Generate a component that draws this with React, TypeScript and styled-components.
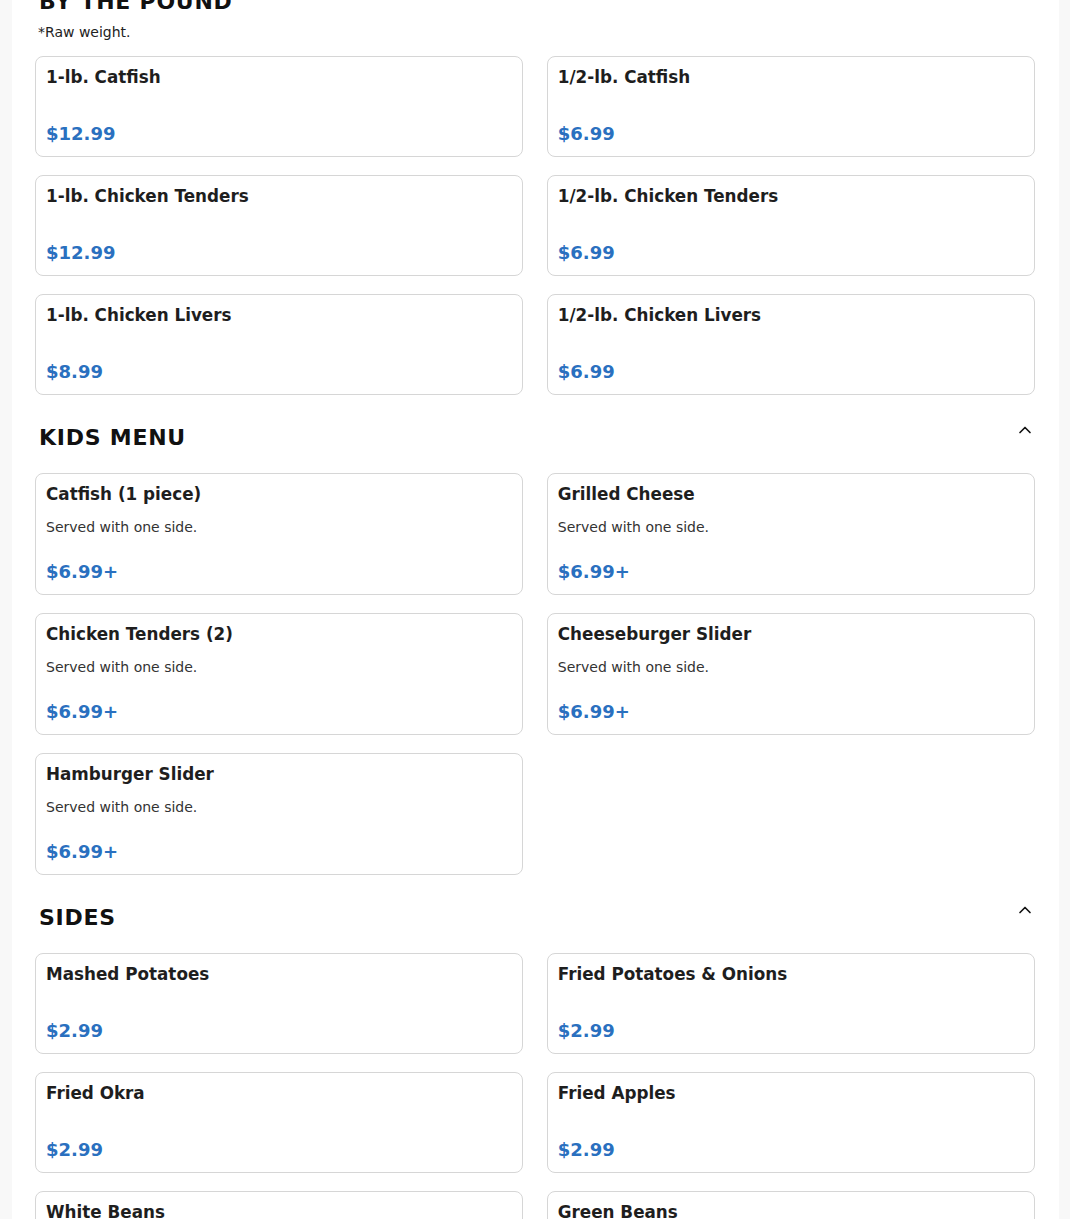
import React from 'react'
import styled, { createGlobalStyle } from 'styled-components'
import { ChevronUp } from 'lucide-react'

const GlobalStyle = createGlobalStyle`
	body {
		margin: 0;
		background: #f8f8f8;
		font-family: "DejaVu Sans", "Liberation Sans", sans-serif;
	}
`

type Item = {
	name: string
	price: string
	desc?: string
}

type Section = {
	title: string
	note?: string
	items: Item[]
}

const sections: Section[] = [
	{
		title: 'BY THE POUND',
		note: '*Raw weight.',
		items: [
			{ name: '1-lb. Catfish', price: '$12.99' },
			{ name: '1/2-lb. Catfish', price: '$6.99' },
			{ name: '1-lb. Chicken Tenders', price: '$12.99' },
			{ name: '1/2-lb. Chicken Tenders', price: '$6.99' },
			{ name: '1-lb. Chicken Livers', price: '$8.99' },
			{ name: '1/2-lb. Chicken Livers', price: '$6.99' },
		],
	},
	{
		title: 'KIDS MENU',
		items: [
			{ name: 'Catfish (1 piece)', desc: 'Served with one side.', price: '$6.99+' },
			{ name: 'Grilled Cheese', desc: 'Served with one side.', price: '$6.99+' },
			{ name: 'Chicken Tenders (2)', desc: 'Served with one side.', price: '$6.99+' },
			{ name: 'Cheeseburger Slider', desc: 'Served with one side.', price: '$6.99+' },
			{ name: 'Hamburger Slider', desc: 'Served with one side.', price: '$6.99+' },
		],
	},
	{
		title: 'SIDES',
		items: [
			{ name: 'Mashed Potatoes', price: '$2.99' },
			{ name: 'Fried Potatoes & Onions', price: '$2.99' },
			{ name: 'Fried Okra', price: '$2.99' },
			{ name: 'Fried Apples', price: '$2.99' },
			{ name: 'White Beans', price: '$2.99' },
			{ name: 'Green Beans', price: '$2.99' },
		],
	},
]

// page is shown scrolled a little, so the first heading sits partly above the top
const Page = styled('div')`
	padding: 0 11.5px 0 12px;
	margin-top: -11.5px;
`

const Panel = styled('main')`
	background: #fff;
	padding: 0 24px 40px 23px;
`

const StyledSection = styled('section')`
	& + & {
		margin-top: 30px;
	}
`

const SectionHeader = styled('div')<{ $hasNote?: boolean }>`
	display: flex;
	justify-content: space-between;
	align-items: flex-start;
	margin-bottom: ${(p) => (p.$hasNote ? '7.45px' : '21.6px')};
`

const Heading = styled('h2')`
	margin: 0;
	padding-left: 4px;
	font-size: 22px;
	line-height: 26.4px;
	font-weight: 700;
	letter-spacing: 0.75px;
	color: #111;
`

const ToggleButton = styled('button')`
	display: flex;
	width: 20px;
	height: 20px;
	margin-top: -5px;
	padding: 0;
	border: 0;
	background: none;
	color: #111;
	cursor: pointer;
`

const Note = styled('p')`
	margin: 0 0 12.65px;
	padding-left: 3px;
	font-size: 14px;
	line-height: 21px;
	color: #222;
`

const Grid = styled('div')`
	display: grid;
	grid-template-columns: 1fr 1fr;
	column-gap: 24px;
	row-gap: 18px;
`

const Card = styled('div')`
	display: flex;
	flex-direction: column;
	padding: 11px 10px;
	border: 1px solid #d6d6d6;
	border-radius: 8px;
	background: #fff;
`

const ItemName = styled('h3')`
	margin: 0 0 14px;
	font-size: 16.8px;
	line-height: 18.4px;
	font-weight: 700;
	color: #1e1e1e;
`

const ItemDesc = styled('p')`
	margin: 0;
	font-size: 14px;
	line-height: 21px;
	color: #333;
`

const Price = styled('div')`
	margin-top: 23px;
	font-size: 18px;
	line-height: 21.6px;
	font-weight: 700;
	color: #2a70bf;
`

const App: React.FC = () => {
	return (
		<Page>
			<GlobalStyle />
			<Panel>
				{sections.map((section) => (
					<StyledSection key={section.title}>
						<SectionHeader $hasNote={!!section.note}>
							<Heading>{section.title}</Heading>
							{section.title !== 'BY THE POUND' && (
								<ToggleButton aria-label="Collapse section">
									<ChevronUp size={20} strokeWidth={2} />
								</ToggleButton>
							)}
						</SectionHeader>
						{section.note && <Note>{section.note}</Note>}
						<Grid>
							{section.items.map((item) => (
								<Card key={item.name}>
									<ItemName>{item.name}</ItemName>
									{item.desc && <ItemDesc>{item.desc}</ItemDesc>}
									<Price>{item.price}</Price>
								</Card>
							))}
						</Grid>
					</StyledSection>
				))}
			</Panel>
		</Page>
	)
}

export default App
